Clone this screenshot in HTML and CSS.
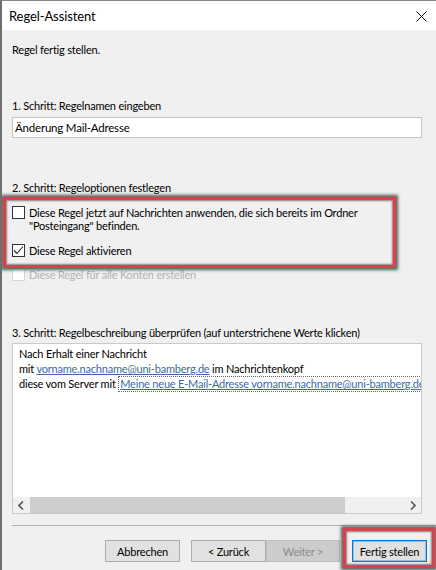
FILE: index.html
```html
<!DOCTYPE html>
<html lang="de">

<head>
    <meta charset="UTF-8">
    <meta name="viewport" content="width=device-width, initial-scale=1.0">
    <title>Regel-Assistent</title>
    <link rel="stylesheet" href="styles.css">
</head>

<body>
    <div class="window">
        <div class="titlebar">
            <span class="title">Regel-Assistent</span>
            <svg class="close" width="11" height="11" viewBox="0 0 11 11">
                <path d="M0.5 0.5L10.5 10.5M10.5 0.5L0.5 10.5" stroke="#111" stroke-width="1" fill="none" />
            </svg>
        </div>

        <div class="content">
            <p class="intro">Regel fertig stellen.</p>

            <p class="step step-name">1. Schritt: Regelnamen eingeben</p>
            <div class="textbox">Änderung Mail-Adresse</div>

            <p class="step step-options">2. Schritt: Regeloptionen festlegen</p>
            <div class="options">
                <div class="marked">
                    <label class="option">
                        <span class="check"></span>
                        <span>Diese Regel jetzt auf Nachrichten anwenden, die sich bereits im Ordner<br>"Posteingang" befinden.</span>
                    </label>
                    <label class="option">
                        <span class="check">
                            <svg width="11" height="11" viewBox="0 0 11 11">
                                <path d="M1 5.5L4 8.5L10 1.5" stroke="#222" stroke-width="1.1" fill="none" />
                            </svg>
                        </span>
                        <span>Diese Regel aktivieren</span>
                    </label>
                    <div class="mark mark-options"></div>
                </div>
                <label class="option disabled">
                    <span class="check"></span>
                    <span>Diese Regel für alle Konten erstellen</span>
                </label>
            </div>

            <p class="step step-desc">3. Schritt: Regelbeschreibung überprüfen (auf unterstrichene Werte klicken)</p>
            <div class="desc">
                <div class="desc-text">
                    <div>Nach Erhalt einer Nachricht</div>
                    <div>mit <a>vorname.nachname@uni-bamberg.de</a> im Nachrichtenkopf</div>
                    <div>diese vom Server mit <a class="focused">Meine neue E-Mail-Adresse vorname.nachname@uni-bamberg.de</a></div>
                </div>
                <div class="hscroll">
                    <span class="arrow">
                        <svg width="6" height="9" viewBox="0 0 6 9">
                            <path d="M5 0.5L1 4.5L5 8.5" stroke="#555" stroke-width="1.6" fill="none" />
                        </svg>
                    </span>
                    <span class="track"><span class="thumb"></span></span>
                    <span class="arrow">
                        <svg width="6" height="9" viewBox="0 0 6 9">
                            <path d="M1 0.5L5 4.5L1 8.5" stroke="#555" stroke-width="1.6" fill="none" />
                        </svg>
                    </span>
                </div>
            </div>

            <div class="footer">
                <button class="btn btn-cancel">Abbrechen</button>
                <button class="btn">&lt; Zurück</button>
                <button class="btn btn-next" disabled>Weiter &gt;</button>
                <span class="marked">
                    <button class="btn btn-default">Fertig stellen</button>
                    <span class="mark mark-finish"></span>
                </span>
            </div>
        </div>
    </div>
</body>

</html>
```

FILE: styles.css
```css
* {
    box-sizing: border-box;
}

body {
    margin: 0;
    font-family: Lato, "Open Sans", sans-serif;
    font-size: 11px;
    letter-spacing: -0.2px;
    color: #000;
    background-color: #f0f0f0;
}

.window {
    height: 100vh;
    border-left: 2px solid #6f6f6f;
    border-top: 1px solid #8a8a8a;
    overflow: hidden;
}

.titlebar {
    height: 29px;
    background-color: white;
    display: flex;
    align-items: center;
    justify-content: space-between;
    padding: 0 9px 0 7px;
}

.title {
    font-size: 13px;
    letter-spacing: -0.1px;
}

.close {
    margin-top: 1px;
}

.content {
    padding: 12px 14px 0 10px;
}

.content p {
    margin: 0;
    line-height: 16px;
}

.step-name {
    margin-top: 40px !important;
}

.textbox {
    margin-top: 3px;
    height: 21px;
    background-color: white;
    border: 1px solid #c4c4c4;
    padding: 0 2px;
    line-height: 19px;
    font-size: 11.5px;
}

.step-options {
    margin-top: 42px !important;
}

.options {
    margin-top: 10px;
    display: grid;
    gap: 11px;
}

.marked {
    position: relative;
    display: grid;
    gap: 12px;
}

.option {
    display: flex;
    align-items: flex-start;
    gap: 4px;
    line-height: 13px;
}

.check {
    flex: none;
    width: 13px;
    height: 13px;
    border: 1px solid #333;
    background-color: white;
    display: flex;
    justify-content: center;
    align-items: center;
}

.option.disabled {
    color: #b4b4b4;
}

.option.disabled .check {
    border-color: #d6d6d6;
}

.mark {
    position: absolute;
    border: 3px solid #d8404c;
    box-shadow: 0 0 3px 2px rgba(40, 40, 40, 0.75), inset 0 0 2px 1px rgba(40, 40, 40, 0.55);
    pointer-events: none;
}

.mark-options {
    top: -9px;
    left: -9px;
    right: 26px;
    bottom: -11px;
}

.step-desc {
    margin-top: 44px !important;
}

.desc {
    margin-top: 2px;
    height: 171px;
    background-color: white;
    border: 1px solid #cacaca;
    display: flex;
    flex-direction: column;
}

.desc-text {
    flex: 1;
    padding: 2px 0 0 6px;
    line-height: 15px;
    white-space: nowrap;
    overflow: hidden;
}

.desc-text a {
    color: #3b68ad;
    text-decoration: underline;
}

.desc-text a.focused {
    padding: 0 1px 1px 1px;
    border: 1px dotted #666;
}

.hscroll {
    height: 16px;
    display: flex;
    background-color: #f0f0f0;
}

.arrow {
    width: 16px;
    display: flex;
    justify-content: center;
    align-items: center;
}

.track {
    flex: 1;
    display: flex;
    align-items: stretch;
    padding: 0 1px;
}

.thumb {
    width: 315px;
    background-color: #cdcdcd;
}

.footer {
    margin: 11px -14px 0 0;
    border-top: 1px solid #b2b2b2;
    padding: 14px 9px 0 0;
    display: flex;
    justify-content: flex-end;
    align-items: flex-start;
}

.btn {
    width: 75px;
    height: 22px;
    padding: 0;
    font-family: inherit;
    font-size: 11px;
    letter-spacing: -0.2px;
    color: #000;
    background-color: #e1e1e1;
    border: 1px solid #adadad;
}

.btn-cancel {
    margin-right: 11px;
}

.btn-next {
    width: 74px;
    margin-right: 12px;
    color: #8a8a8a;
    background-color: #cccccc;
    border-color: #bfbfbf;
}

.btn-default {
    border-color: #0078d7;
    box-shadow: inset 0 0 0 1px rgba(0, 120, 215, 0.35);
}

.mark-finish {
    top: -12px;
    left: -9px;
    right: -8px;
    bottom: -6px;
}
```
